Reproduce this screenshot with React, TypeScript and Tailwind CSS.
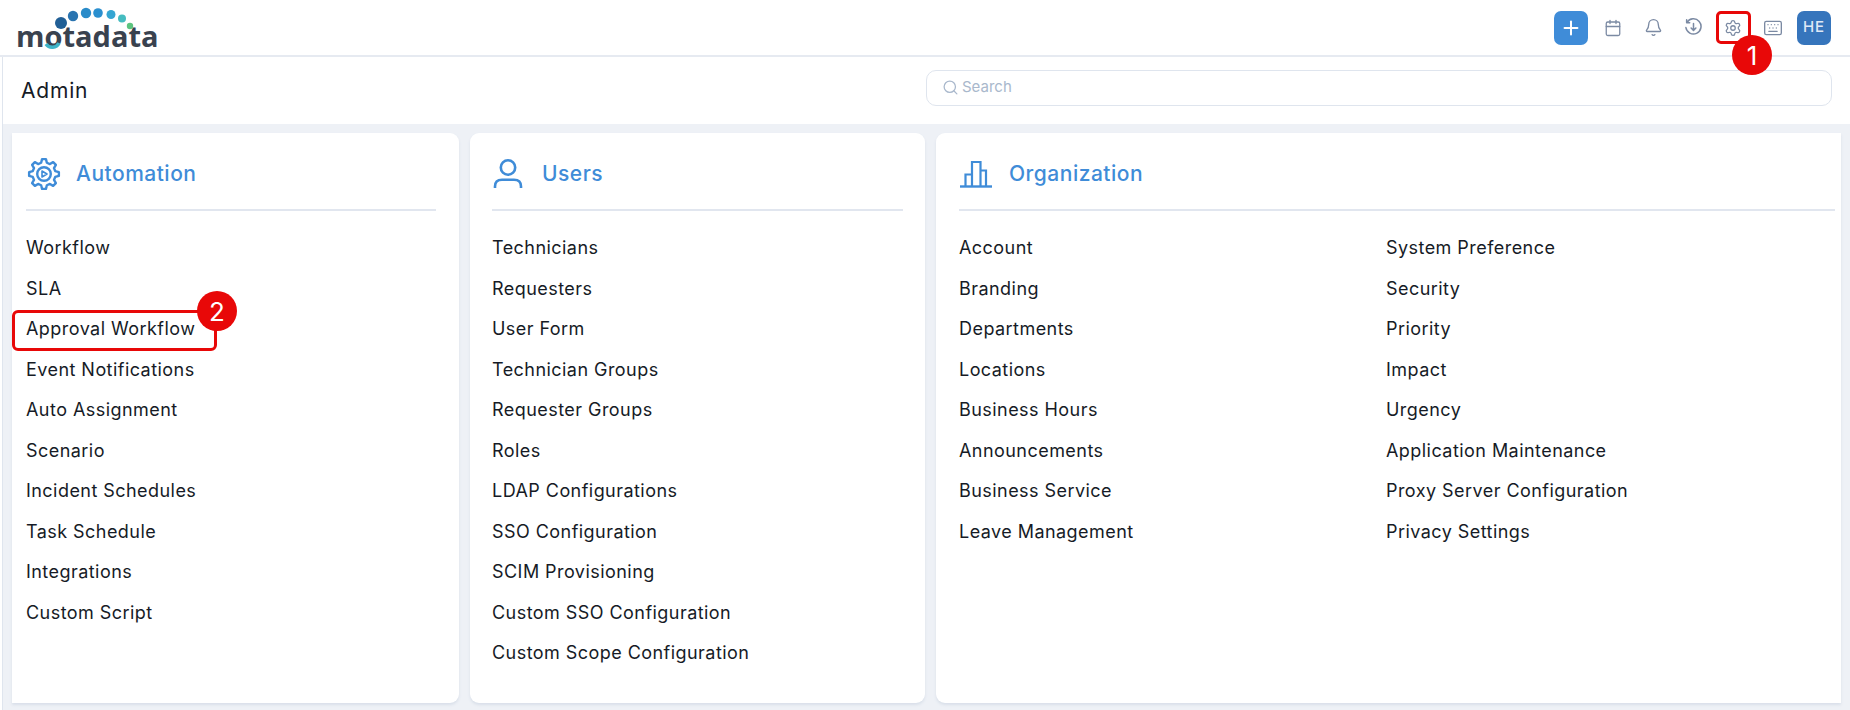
import React from 'react';
import { Bell, Calendar, Keyboard, Plus, Search, Settings } from 'lucide-react';

const automation = ['Workflow', 'SLA', 'Approval Workflow', 'Event Notifications', 'Auto Assignment', 'Scenario', 'Incident Schedules', 'Task Schedule', 'Integrations', 'Custom Script'];
const users = ['Technicians', 'Requesters', 'User Form', 'Technician Groups', 'Requester Groups', 'Roles', 'LDAP Configurations', 'SSO Configuration', 'SCIM Provisioning', 'Custom SSO Configuration', 'Custom Scope Configuration'];
const orgLeft = ['Account', 'Branding', 'Departments', 'Locations', 'Business Hours', 'Announcements', 'Business Service', 'Leave Management'];
const orgRight = ['System Preference', 'Security', 'Priority', 'Impact', 'Urgency', 'Application Maintenance', 'Proxy Server Configuration', 'Privacy Settings'];

// 8 tooth outline for the automation gear
const gearPoints = Array.from({ length: 8 }).flatMap((_, i) => {
  const a = (i * 45 * Math.PI) / 180;
  return [
    [a - 0.25, 11.6],
    [a - 0.13, 15],
    [a + 0.13, 15],
    [a + 0.25, 11.6],
  ].map(([t, r]) => `${(17 + r * Math.cos(t)).toFixed(2)},${(17 + r * Math.sin(t)).toFixed(2)}`);
}).join(' ');

const LinkList = ({ items }: { items: string[] }) => (
  <ul className="flex flex-col">
    {items.map((item) => (
      <li key={item} className="h-[40.5px] leading-[40.5px] text-[18px] tracking-[0.45px] text-[#161b26] whitespace-nowrap">{item}</li>
    ))}
  </ul>
);

const CardTitle = ({ icon, title }: { icon: React.ReactNode; title: string }) => (
  <div className="h-[78px] pt-[6px] border-b-2 border-[#e1e6ef] flex items-center">
    <div className="w-[50px] flex items-center">{icon}</div>
    <span className="text-[21px] tracking-[0.5px] font-medium text-[#3f8cd8]">{title}</span>
  </div>
);

const AutomationIcon = () => (
  <svg viewBox="0 0 34 34" className="w-[34px] h-[34px] ml-px" fill="none" stroke="#3f8cd8" strokeWidth="2.400" strokeLinejoin="round">
    <polygon points={gearPoints} />
    <circle cx="17" cy="17" r="6.800" />
    <path d="M15 14 L20 17 L15 20 Z" strokeWidth="1.600" />
  </svg>
);

const UserIcon = () => (
  <svg viewBox="0 0 32 32" className="w-8 h-8" fill="none" stroke="#3f8cd8" strokeWidth="2.6">
    <circle cx="16" cy="9.5" r="7.2" />
    <path d="M3 30 V28.5 C3 24 6 21.8 10 21.8 H22 C26 21.8 29 24 29 28.5 V30" />
  </svg>
);

const OrgIcon = () => (
  <svg viewBox="0 0 34 28" className="w-[34px] h-7" fill="none" stroke="#3f8cd8" strokeWidth="2.2">
    <path d="M1 26.5 H33" strokeWidth="2.4" />
    <path d="M6.5 26 V14.5 H13 M13 26 V2 H21.500 V26 M21.500 10.500 H27 V26" />
  </svg>
);

const HistoryIcon = () => (
  <svg viewBox="0 0 20 20" className="w-[19px] h-[19px]" fill="none" stroke="#7b8aa3" strokeWidth="1.6" strokeLinecap="round" strokeLinejoin="round">
    <path d="M3.200 4.500 A8 8 0 1 1 2 10" />
    <path d="M2.800 1.800 V5 H6" />
    <path d="M10 5.800 V13 M7.500 10.500 L10 13 L12.500 10.500" />
  </svg>
);

const Logo = () => (
  <div className="relative w-[150px] h-[56px] ml-4">
    <span className="absolute left-0 top-[14px] font-['Open_Sans',sans-serif] font-bold text-[29px] leading-[44px] text-[#39424f]">motadata</span>
    <svg viewBox="0 0 150 56" className="absolute left-0 top-0 w-[150px] h-[56px]">
      <path d="M43 43 A7.500 7.500 0 0 1 30 44" fill="none" stroke="#3fb4c8" strokeWidth="3.500" />
      <circle cx="45" cy="23" r="6" fill="#215f96" />
      <circle cx="57" cy="16" r="5.200" fill="#2a74b0" />
      <circle cx="70" cy="13" r="5.200" fill="#2a8bc9" />
      <circle cx="82" cy="13" r="4.800" fill="#2a8fcf" />
      <circle cx="95" cy="14.500" r="4.500" fill="#35a5d2" />
      <circle cx="106" cy="18.500" r="4" fill="#45bcc0" />
      <circle cx="114" cy="26" r="3.200" fill="#5cc47f" />
    </svg>
  </div>
);

const TopIcon = ({ children }: { children: React.ReactNode }) => (
  <div className="w-10 h-[34px] flex items-center justify-center text-[#7b8aa3]">{children}</div>
);

const Badge = ({ value, className }: { value: string; className: string }) => (
  <div className={`absolute w-10 h-10 rounded-full bg-[#e80808] text-white text-[26px] flex items-center justify-center ${className}`}>{value}</div>
);

export default function App() {
  return (
    <div className="relative w-[1850px] h-[710px] overflow-hidden bg-white font-['Inter',sans-serif]">
      {/* Top bar */}
      <header className="h-[57px] border-b-2 border-[#e6eaf1] flex items-center justify-between pr-[19px] rounded-tr-[16px]">
        <Logo />
        <div className="flex items-center">
          <button className="w-[34px] h-[34px] mr-[5px] rounded-[7px] bg-[#3f8cd8] text-white flex items-center justify-center">
            <Plus size={22} strokeWidth={2.2} />
          </button>
          <TopIcon><Calendar size={18} strokeWidth={1.7} /></TopIcon>
          <TopIcon><Bell size={19} strokeWidth={1.7} /></TopIcon>
          <TopIcon><HistoryIcon /></TopIcon>
          <TopIcon><Settings size={18} strokeWidth={1.7} /></TopIcon>
          <TopIcon><Keyboard size={20} strokeWidth={1.6} /></TopIcon>
          <div className="w-[34px] h-[34px] ml-1 rounded-[7px] bg-[#3675bc] text-[#dfe9f6] text-[15px] font-medium tracking-[1px] flex items-center justify-center">HE</div>
        </div>
      </header>

      {/* Page */}
      <main className="ml-[2px] h-[653px] border-l-[1px] border-[#dfe5ee] flex flex-col bg-[#eef1f6]">
        <div className="h-[67px] bg-white flex items-center justify-between pl-[18px] pr-[18px] shrink-0">
          <h1 className="text-[21px] tracking-[0.8px] text-[#161b26]">Admin</h1>
          <div className="w-[906px] h-[36px] mb-[6px] rounded-[10px] border border-[#dfe5ee] flex items-center pl-[15px] gap-[3px] text-[#a9b8cc] text-[15px]">
            <Search size={17} strokeWidth={1.8} />
            <span>Search</span>
          </div>
        </div>

        <div className="flex gap-[11px] pl-[9px] pr-[9px] pt-[9px] pb-[7px] flex-1 min-h-0">
          <section className="w-[447px] bg-white rounded-r-[9px] shadow-[0_2px_3px_#d9dfe9] px-[14px] pr-[23px]">
            <CardTitle icon={<AutomationIcon />} title="Automation" />
            <div className="pt-[17px]"><LinkList items={automation} /></div>
          </section>
          <section className="w-[455px] bg-white rounded-[9px] shadow-[0_2px_3px_#d9dfe9] pl-[22px] pr-[22px]">
            <CardTitle icon={<UserIcon />} title="Users" />
            <div className="pt-[17px]"><LinkList items={users} /></div>
          </section>
          <section className="flex-1 bg-white rounded-l-[9px] shadow-[0_2px_3px_#d9dfe9] pl-[23px] pr-[6px]">
            <CardTitle icon={<OrgIcon />} title="Organization" />
            <div className="pt-[17px] grid grid-cols-[427px_1fr]">
              <LinkList items={orgLeft} />
              <LinkList items={orgRight} />
            </div>
          </section>
        </div>
      </main>

      {/* Tutorial callouts */}
      <div className="absolute left-[1716px] top-[11px] w-[35px] h-[33px] border-[3px] border-[#e80808] rounded-[5px]" />
      <Badge value="1" className="left-[1732px] top-[35px]" />
      <div className="absolute left-[12px] top-[310px] w-[205px] h-[41px] border-[3px] border-[#e80808] rounded-[6px]" />
      <Badge value="2" className="left-[197px] top-[291px]" />
    </div>
  );
}
